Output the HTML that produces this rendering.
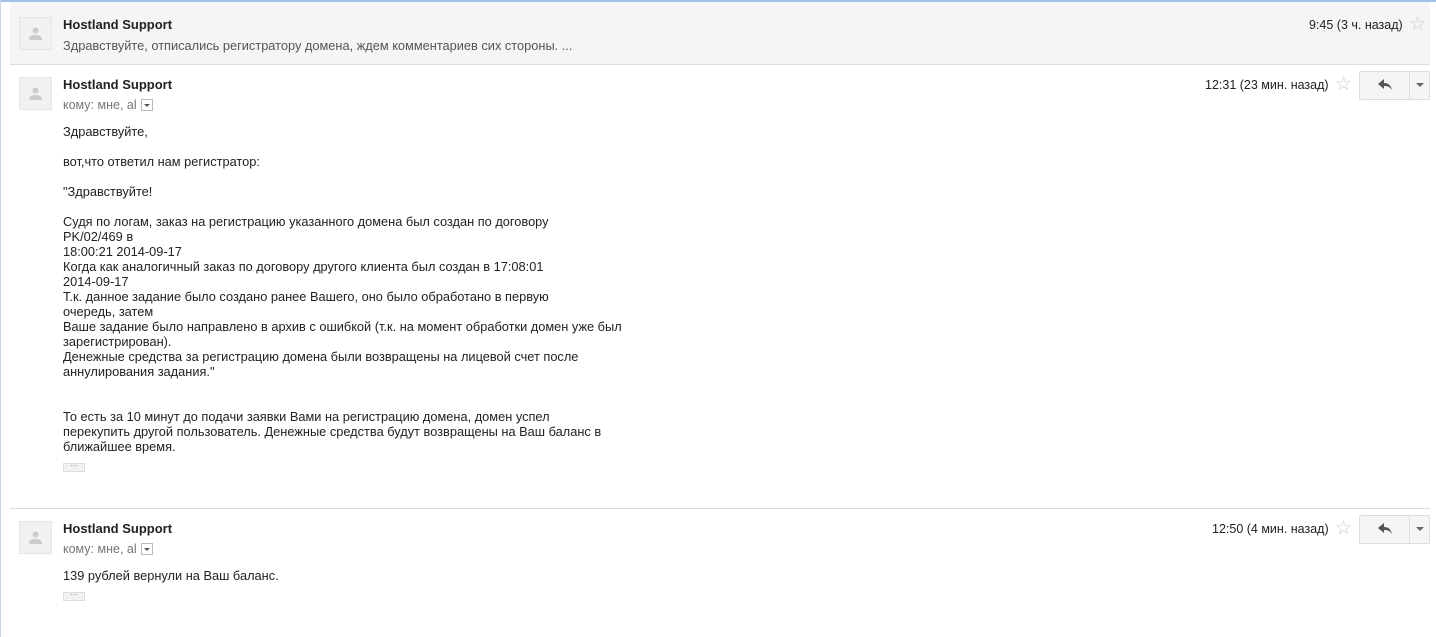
<!DOCTYPE html>
<html><head><meta charset="utf-8"><style>
body{margin:0;width:1436px;height:637px;background:#fff;font-family:"Liberation Sans",Arial,sans-serif;position:relative;overflow:hidden;color:#222}
.abs{position:absolute}
.av{position:absolute;left:19px;width:31px;height:31px;background:#f1f1f1;border:1px solid #e5e5e5}
.av svg{position:absolute;left:8px;top:8px}
.name{position:absolute;left:63px;font-weight:bold;font-size:13px;color:#222}
.to{position:absolute;left:63px;font-size:12.5px;color:#777}
.dd{display:inline-block;width:10px;height:10px;border:1px solid #bbb;vertical-align:-2px;margin-left:4px;position:relative;background:#fff}
.dd:after{content:"";position:absolute;left:2px;top:4px;border:3px solid transparent;border-top:3px solid #555;}
.time{position:absolute;font-size:12.5px;color:#222}
.star{position:absolute;font-size:19px;color:#ccc}
.btn{position:absolute;width:69px;height:27px;border:1px solid #ddd;border-radius:2px;background:#f5f5f5}
.btn .sep{position:absolute;left:49px;top:0;width:1px;height:27px;background:#ddd}
.btn .ar{position:absolute;left:56px;top:11px;border:4px solid transparent;border-top:4px solid #666}
.body{position:absolute;left:63px;font-size:12.8px;line-height:15px;color:#222}
.more{position:absolute;left:63px;width:20px;height:7px;background:#f1f1f1;border:1px solid #ddd;font-size:8px;line-height:4px;text-align:center;color:#777}
.line{position:absolute;left:10px;width:1420px;height:1px;background:#dcdcdc}
</style></head><body>
<div class="abs" style="left:0;top:0;width:1436px;height:2px;background:#9fc2e6"></div>
<div class="abs" style="left:0;top:0;width:1px;height:637px;background:#c8d8ea"></div>
<div class="abs" style="left:10px;top:2px;width:1420px;height:62px;background:#f5f5f5"></div>
<div class="line" style="top:64px"></div>

<div class="av" style="top:17px"><svg width="15" height="15" viewBox="0 0 15 15"><circle cx="7.5" cy="4.5" r="3" fill="#ccc"/><path d="M1 14c0-4 3-5 6.5-5s6.5 1 6.5 5z" fill="#ccc"/></svg></div>
<div class="name" style="top:17px">Hostland Support</div>
<div class="abs" style="left:63px;top:38px;font-size:12.8px;color:#555">Здравствуйте, отписались регистратору домена, ждем комментариев сих стороны. ...</div>
<div class="time" style="left:1309px;top:18px">9:45 (3 ч. назад)</div>
<div class="star" style="left:1409px;top:13px">☆</div>

<div class="av" style="top:77px"><svg width="15" height="15" viewBox="0 0 15 15"><circle cx="7.5" cy="4.5" r="3" fill="#ccc"/><path d="M1 14c0-4 3-5 6.5-5s6.5 1 6.5 5z" fill="#ccc"/></svg></div>
<div class="name" style="top:77px">Hostland Support</div>
<div class="to" style="top:98px">кому: мне, al<span class="dd"></span></div>
<div class="time" style="left:1205px;top:78px">12:31 (23 мин. назад)</div>
<div class="star" style="left:1335px;top:73px">☆</div>
<div class="btn" style="left:1359px;top:71px"><svg class="abs" style="left:18px;top:7px" width="14" height="12" viewBox="0 0 14 12"><path d="M6 0L0 5l6 5V7c4 0 6 1 8 4-1-4-3-7-8-7z" fill="#555"/></svg><div class="sep"></div><div class="ar"></div></div>

<div class="body" style="top:124px">Здравствуйте,<br><br>вот,что ответил нам регистратор:<br><br>"Здравствуйте!<br><br>Судя по логам, заказ на регистрацию указанного домена был создан по договору<br>PK/02/469 в<br>18:00:21 2014-09-17<br>Когда как аналогичный заказ по договору другого клиента был создан в 17:08:01<br>2014-09-17<br>Т.к. данное задание было создано ранее Вашего, оно было обработано в первую<br>очередь, затем<br>Ваше задание было направлено в архив с ошибкой (т.к. на момент обработки домен уже был<br>зарегистрирован).<br>Денежные средства за регистрацию домена были возвращены на лицевой счет после<br>аннулирования задания."<br><br><br>То есть за 10 минут до подачи заявки Вами на регистрацию домена, домен успел<br>перекупить другой пользователь. Денежные средства будут возвращены на Ваш баланс в<br>ближайшее время.</div>
<div class="more" style="top:463px">···</div>

<div class="line" style="top:508px"></div>

<div class="av" style="top:521px"><svg width="15" height="15" viewBox="0 0 15 15"><circle cx="7.5" cy="4.5" r="3" fill="#ccc"/><path d="M1 14c0-4 3-5 6.5-5s6.5 1 6.5 5z" fill="#ccc"/></svg></div>
<div class="name" style="top:521px">Hostland Support</div>
<div class="to" style="top:542px">кому: мне, al<span class="dd"></span></div>
<div class="time" style="left:1212px;top:522px">12:50 (4 мин. назад)</div>
<div class="star" style="left:1335px;top:517px">☆</div>
<div class="btn" style="left:1359px;top:515px"><svg class="abs" style="left:18px;top:7px" width="14" height="12" viewBox="0 0 14 12"><path d="M6 0L0 5l6 5V7c4 0 6 1 8 4-1-4-3-7-8-7z" fill="#555"/></svg><div class="sep"></div><div class="ar"></div></div>

<div class="body" style="top:568px">139 рублей вернули на Ваш баланс.</div>
<div class="more" style="top:592px">···</div>
</body></html>
